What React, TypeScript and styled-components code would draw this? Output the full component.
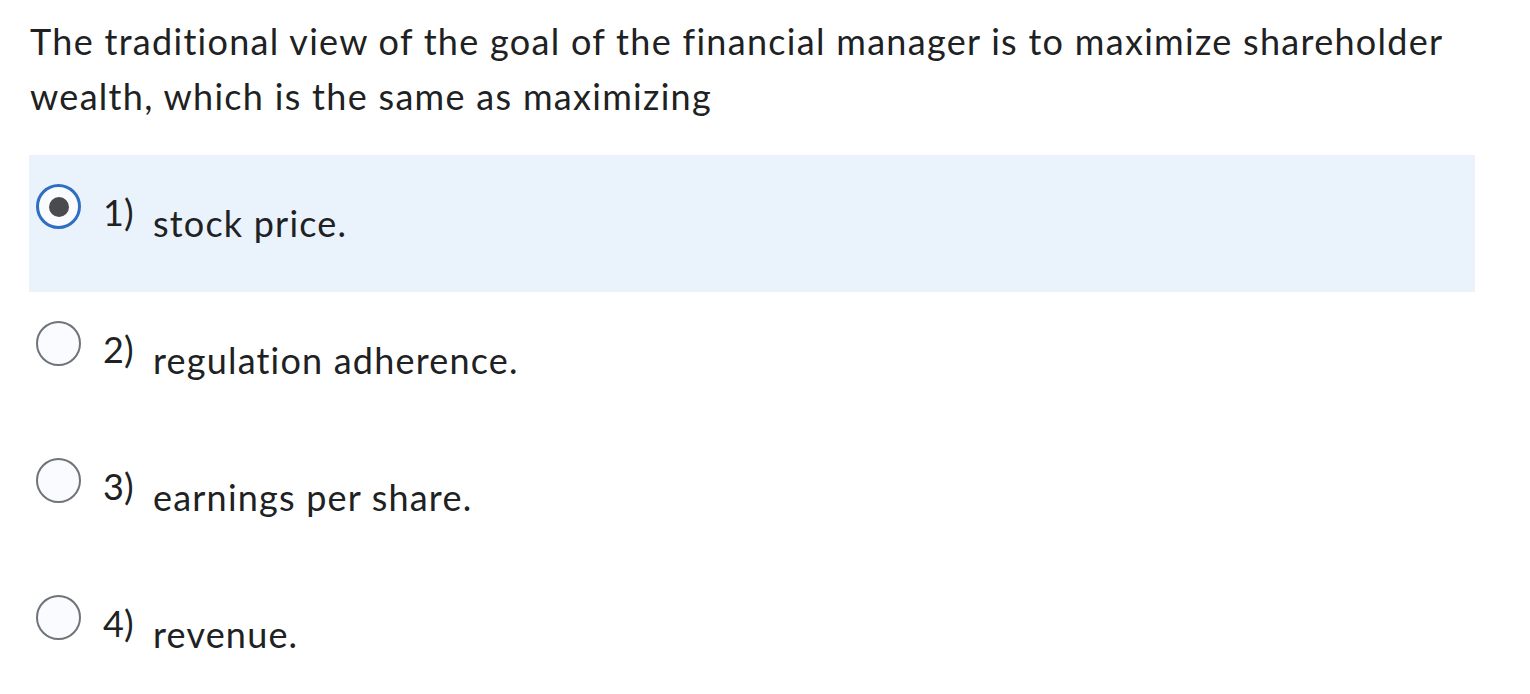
import styled, { createGlobalStyle } from "styled-components";

const GlobalStyle = createGlobalStyle`
  html, body {
    margin: 0;
    padding: 0;
    background: #ffffff;
  }
  body {
    font-family: Lato, "Noto Sans", sans-serif;
    color: #202122;
    font-variant-ligatures: none;
  }
`;

type Choice = {
  id: number;
  label: string;
};

const choices: Choice[] = [
  { id: 1, label: "stock price." },
  { id: 2, label: "regulation adherence." },
  { id: 3, label: "earnings per share." },
  { id: 4, label: "revenue." },
];

const Page = styled.div`
  width: 1446px;
  padding: 14px 0 0 29px;
`;

const Question = styled.p`
  margin: 0 0 31px 1px;
  font-size: 36px;
  line-height: 55px;
  font-weight: 400;
  letter-spacing: 1.3px;
`;

const Options = styled.div`
  display: flex;
  flex-direction: column;
`;

const Option = styled.label<{ $selected?: boolean }>`
  display: flex;
  align-items: flex-start;
  box-sizing: border-box;
  height: 137px;
  padding: 29px 0 0 7px;
  background: ${(p) => (p.$selected ? "#eaf2fc" : "transparent")};
  cursor: pointer;
`;

const Radio = styled.span<{ $checked?: boolean }>`
  position: relative;
  flex: none;
  box-sizing: border-box;
  width: 45px;
  height: 45px;
  border-radius: 50%;
  background: #f9fbff;
  border: ${(p) => (p.$checked ? "3.5px solid #2f6fc2" : "2px solid #6e7477")};

  &::after {
    content: "";
    display: ${(p) => (p.$checked ? "block" : "none")};
    position: absolute;
    left: 50%;
    top: 50%;
    width: 20px;
    height: 20px;
    margin: -10px 0 0 -10px;
    border-radius: 50%;
    background: #494c4e;
  }
`;

const Number = styled.span`
  flex: none;
  width: 50px;
  margin: 7px 0 0 22px;
  font-size: 36px;
  line-height: 43px;
`;

const Label = styled.span`
  margin-top: 18px;
  font-size: 36px;
  line-height: 43px;
  letter-spacing: 1.2px;
`;

export default function App() {
  const selected = 1;

  return (
    <Page>
      <GlobalStyle />
      <Question>
        The traditional view of the goal of the financial manager is to
        maximize shareholder wealth, which is the same as maximizing
      </Question>
      <Options>
        {choices.map((c) => (
          <Option key={c.id} $selected={c.id === selected}>
            <Radio $checked={c.id === selected} />
            <Number>{c.id})</Number>
            <Label>{c.label}</Label>
          </Option>
        ))}
      </Options>
    </Page>
  );
}
